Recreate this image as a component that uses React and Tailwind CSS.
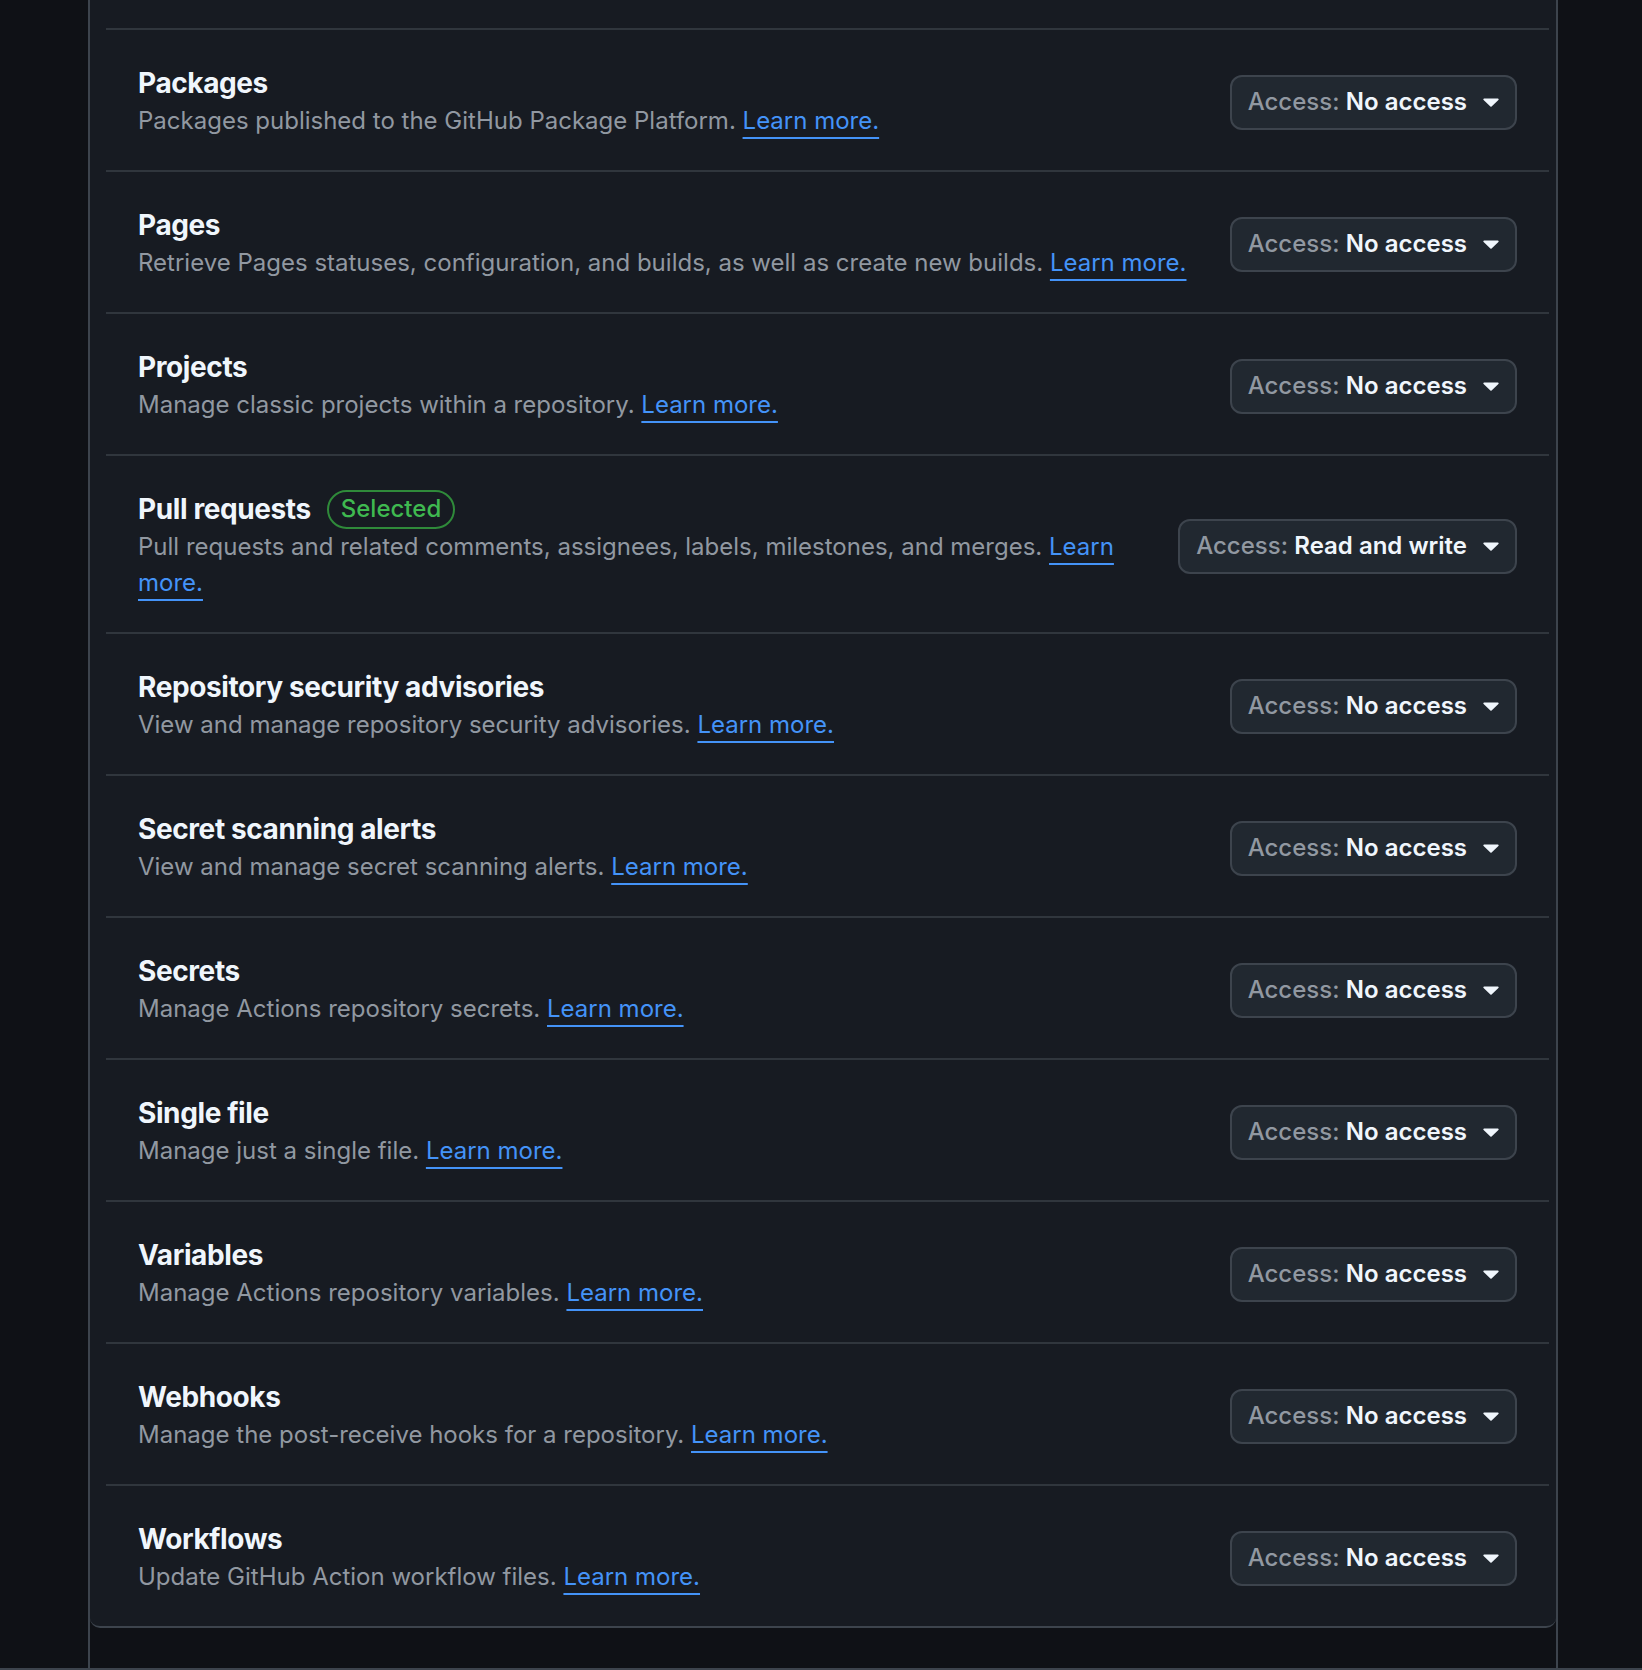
import { useState } from 'react'

const font = { fontFamily: 'Inter, "Noto Sans", "Liberation Sans", sans-serif' }

const rows = [
  { name: 'Packages', desc: 'Packages published to the GitHub Package Platform.', access: 'No access' },
  { name: 'Pages', desc: 'Retrieve Pages statuses, configuration, and builds, as well as create new builds.', access: 'No access' },
  { name: 'Projects', desc: 'Manage classic projects within a repository.', access: 'No access' },
  { name: 'Pull requests', desc: 'Pull requests and related comments, assignees, labels, milestones, and merges.', access: 'Read and write', selected: true },
  { name: 'Repository security advisories', desc: 'View and manage repository security advisories.', access: 'No access' },
  { name: 'Secret scanning alerts', desc: 'View and manage secret scanning alerts.', access: 'No access' },
  { name: 'Secrets', desc: 'Manage Actions repository secrets.', access: 'No access' },
  { name: 'Single file', desc: 'Manage just a single file.', access: 'No access' },
  { name: 'Variables', desc: 'Manage Actions repository variables.', access: 'No access' },
  { name: 'Webhooks', desc: 'Manage the post-receive hooks for a repository.', access: 'No access' },
  { name: 'Workflows', desc: 'Update GitHub Action workflow files.', access: 'No access' },
]

function Caret() {
  return (
    <svg width="16" height="9" viewBox="0 0 16 9" className="shrink-0">
      <path d="M1.2 0.6h13.6c0.8 0 1.2 0.9 0.6 1.5L8.6 8.4c-0.35 0.35-0.85 0.35-1.2 0L0.6 2.1C0 1.5 0.4 0.6 1.2 0.6Z" fill="#f0f6fc" />
    </svg>
  )
}

function AccessButton({ value }) {
  return (
    <button className="shrink-0 h-[55px] flex items-center gap-[16px] pl-[16px] pr-[16px] rounded-[12px] border-2 border-[#3d444d] bg-[#212830] text-[24px] font-medium">
      <span>
        <span className="text-[#9198a1]">Access: </span>
        <span className="text-[#f0f6fc] font-semibold">{value}</span>
      </span>
      <Caret />
    </button>
  )
}

function Row({ row }) {
  return (
    <div className="border-t-2 border-[#30363d] pt-[35px] pb-[31px] pl-[32px] pr-[32px] flex items-center justify-between gap-[24px]">
      <div className="flex-1 min-w-0">
        <div className="flex items-center gap-[16px] h-[36px]">
          <h3 className="text-[28px] leading-[36px] font-bold tracking-[-0.4px] text-[#f0f6fc]">{row.name}</h3>
          {row.selected && (
            <span className="h-[39px] px-[12px] flex items-center rounded-full border-2 border-[#2f8a3a] text-[#3fb950] text-[24px] font-medium">
              Selected
            </span>
          )}
        </div>
        <p className="mt-[2px] text-[24px] leading-[36px] text-[#9198a1]">
          {row.desc}{' '}
          <a href="#" className="text-[#4493f8] underline decoration-2 underline-offset-[8px]">Learn more.</a>
        </p>
      </div>
      <AccessButton value={row.access} />
    </div>
  )
}

export default function App() {
  const [list] = useState(rows)
  return (
    <div style={font} className="w-[1642px] h-[1670px] bg-[#0f1116] flex flex-col overflow-hidden">
      <div className="flex-1 ml-[88px] w-[1470px] border-x-2 border-[#3d444d] flex flex-col">
        <div className="bg-[#171b22] border-b-2 border-[#3d444d] rounded-b-[10px] pl-[16px] pr-[7px]">
          <div className="h-[28px]" />
          {list.map(r => <Row key={r.name} row={r} />)}
        </div>
      </div>
      <div className="h-[2px] bg-[#3d444d]" />
    </div>
  )
}
